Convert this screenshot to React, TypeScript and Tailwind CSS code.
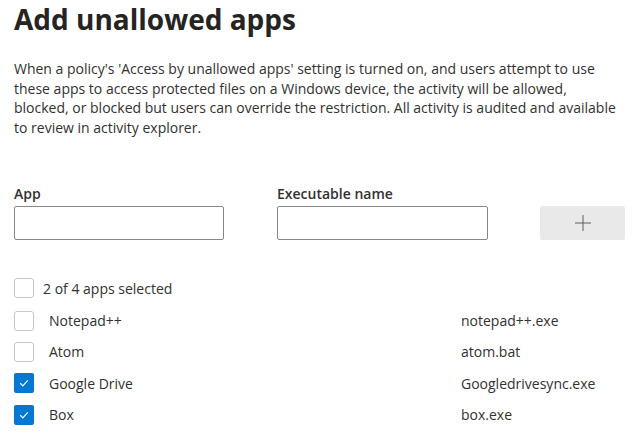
import React from "react";

const rows = [
  { name: "Notepad++", exe: "notepad++.exe", checked: false },
  { name: "Atom", exe: "atom.bat", checked: false },
  { name: "Google Drive", exe: "Googledrivesync.exe", checked: true },
  { name: "Box", exe: "box.exe", checked: true },
];

function Box({ checked }: { checked: boolean }) {
  if (checked) {
    return (
      <div className="w-[20px] h-[20px] rounded-[2px] bg-[#0078d4] flex items-center justify-center shrink-0">
        <svg width="12" height="12" viewBox="0 0 12 12" fill="none">
          <path d="M2.2 6.3 L4.8 8.8 L9.8 3.4" stroke="white" strokeWidth="1.2" />
        </svg>
      </div>
    );
  }
  return <div className="w-[20px] h-[20px] rounded-[3px] border border-[#c8c6c4] bg-white shrink-0" />;
}

export default function App() {
  return (
    <div
      className="bg-white w-[640px] h-[435px] overflow-hidden pl-[14px] text-[#323130]"
      style={{ fontFamily: '"Open Sans", "Noto Sans", sans-serif' }}
    >
      <h1 className="text-[28px] font-bold leading-[36px] pt-[1px] text-[#252423]">Add unallowed apps</h1>
      <p className="mt-[22px] text-[14px] leading-[19.5px]">
        When a policy's 'Access by unallowed apps' setting is turned on, and users attempt to use
        <br />
        these apps to access protected files on a Windows device, the activity will be allowed,
        <br />
        blocked, or blocked but users can override the restriction. All activity is audited and available
        <br />
        to review in activity explorer.
      </p>
      <div className="flex items-end mt-[47px]">
        <div className="w-[210px]">
          <div className="text-[14px] font-semibold leading-[20px] mb-[2px]">App</div>
          <div className="h-[34px] border border-[#8a8886] rounded-[2px]" />
        </div>
        <div className="w-[211px] ml-[53px]">
          <div className="text-[14px] font-semibold leading-[20px] mb-[2px]">Executable name</div>
          <div className="h-[34px] border border-[#8a8886] rounded-[2px]" />
        </div>
        <div className="w-[85px] h-[34px] ml-[52px] bg-[#e9e9e9] rounded-[2px] flex items-center justify-center">
          <svg width="18" height="18" viewBox="0 0 18 18">
            <path d="M9 1 V17 M1 9 H17" stroke="#605e5c" strokeWidth="1" />
          </svg>
        </div>
      </div>
      <div className="mt-[38px] flex items-center h-[20px]">
        <Box checked={false} />
        <span className="ml-[9px] text-[14px]">2 of 4 apps selected</span>
      </div>
      <div className="mt-[7px] flex flex-col">
        {rows.map((r) => (
          <div key={r.name} className="flex items-center h-[31.3px]">
            <Box checked={r.checked} />
            <span className="ml-[15px] w-[412px] text-[14px]">{r.name}</span>
            <span className="text-[14px]">{r.exe}</span>
          </div>
        ))}
      </div>
    </div>
  );
}
